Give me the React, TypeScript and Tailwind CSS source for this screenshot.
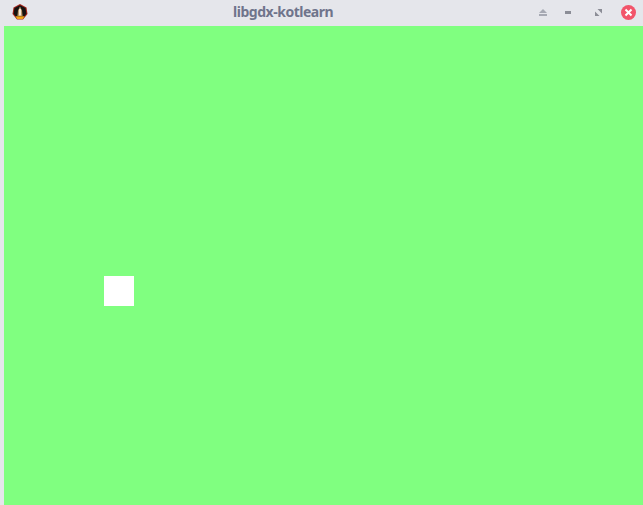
import React from "react";

function AppIcon() {
  return (
    <svg width="16" height="16" viewBox="0 0 16 16">
      <polygon points="8,0 14.5,3.5 15.5,10 11,15.5 5,15.5 0.5,10 1.5,3.5" fill="#a3241a" />
      <polygon points="8,1.2 13.5,4 14.4,9.8 10.5,14.4 5.5,14.4 1.6,9.8 2.5,4" fill="#161210" />
      <polygon points="8,2.5 10,6.5 10.6,12 5.4,12 6,6.5" fill="#b9966a" />
      <rect x="7" y="5" width="2" height="6.5" fill="#f5ead8" />
      <polygon points="3.5,12.2 12.5,12.2 10.8,15 5.2,15" fill="#f2a516" />
    </svg>
  );
}

function WindowButtons() {
  return (
    <div className="flex items-center">
      <svg width="8" height="7" viewBox="0 0 8 7" className="mr-[18px]">
        <polygon points="4,0 8,4 0,4" fill="#a6a9b3" />
        <rect x="0" y="5" width="8" height="2" fill="#a6a9b3" />
      </svg>
      <div className="w-[6px] h-[3px] bg-[#8b8d96] mr-[24px]" />
      <svg width="7" height="7" viewBox="0 0 7 7" className="mr-[19px]">
        <polygon points="2.5,0 7,0 7,4.5" fill="#8b8d96" />
        <polygon points="0,2.5 4.5,7 0,7" fill="#8b8d96" />
      </svg>
      <div className="w-[15px] h-[15px] rounded-full bg-[#f2546a] flex items-center justify-center">
        <svg width="9" height="9" viewBox="0 0 9 9">
          <path d="M1.5 1.5 L7.5 7.5 M7.5 1.5 L1.5 7.5" stroke="#ffffff" strokeWidth="2" />
        </svg>
      </div>
    </div>
  );
}

export default function App() {
  return (
    <div className="w-[643px] h-[505px] bg-[#e5e6eb] flex flex-col overflow-hidden font-['Noto_Sans',sans-serif]">
      <header className="relative h-[26px] shrink-0 flex items-center justify-between pl-[12px] pr-[7px] pb-[2px]">
        <AppIcon />
        <span className="absolute left-[233px] top-[2px] text-[14px] leading-[20px] font-bold tracking-[-0.47px] text-[#6f748b]">
          libgdx-kotlearn
        </span>
        <WindowButtons />
      </header>
      <main className="relative flex-1 ml-[4px] bg-[#80ff80]">
        <div className="absolute left-[100px] top-[250px] w-[30px] h-[30px] bg-white" />
      </main>
    </div>
  );
}
